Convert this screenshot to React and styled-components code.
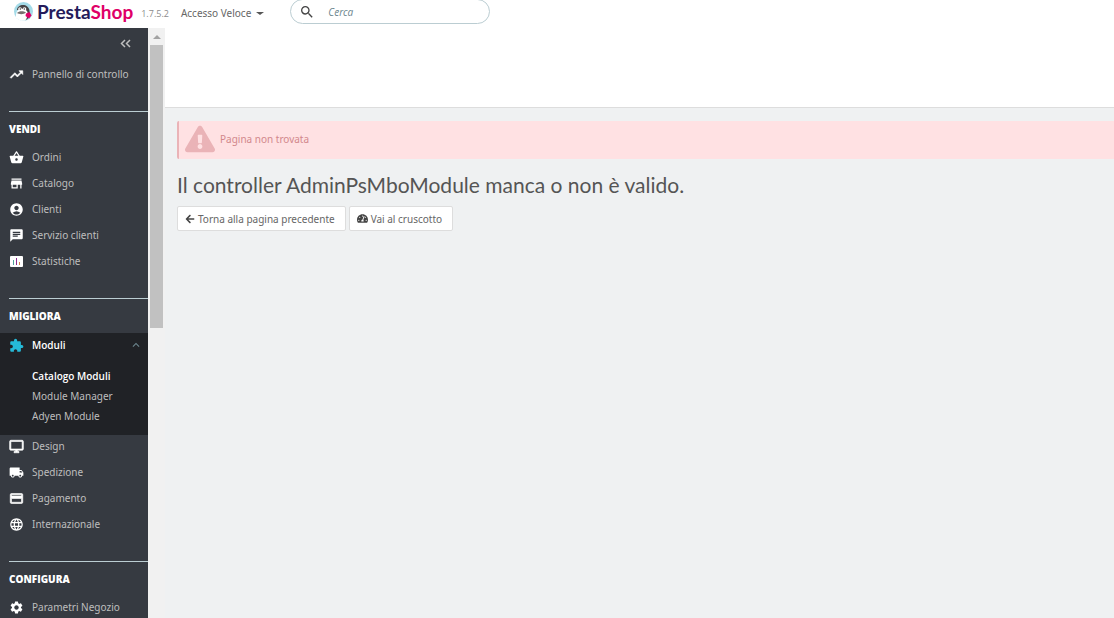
import React from "react"
import styled, { createGlobalStyle } from "styled-components"
import {
  MdAccountCircle,
  MdChat,
  MdExtension,
  MdKeyboardArrowUp,
  MdLanguage,
  MdLocalShipping,
  MdOutlineDesktopWindows,
  MdPayment,
  MdSearch,
  MdSettings,
  MdShoppingBasket,
  MdStore,
  MdTrendingUp,
} from "react-icons/md"
import {
  FaArrowLeft,
  FaExclamationTriangle,
  FaTachometerAlt,
} from "react-icons/fa"

const white = "#ffffff"
const slate = "#363a41"
const ink = "#202226"
const grey = "#bebebe"
const line = "#bbcdd2"
const cyan = "#25b9d7"
const pageGrey = "#eff1f2"
const textGrey = "#6c868e"

const bodyFont = `"Noto Sans", "Open Sans", sans-serif`
const boldFont = `"Open Sans", sans-serif`

const GlobalStyle = createGlobalStyle`
  * {
    box-sizing: border-box;
  }
  body {
    margin: 0;
    background: ${pageGrey};
    font-family: ${bodyFont};
    font-size: 10px;
    color: #555555;
  }
`

const Shell = styled.div`
  display: flex;
  flex-direction: column;
  height: 100vh;
  overflow: hidden;
`

const Header = styled.header`
  display: flex;
  align-items: flex-start;
  flex: none;
  height: 28px;
  padding-left: 13px;
  background: ${white};
`

const Brand = styled.a`
  display: flex;
  align-items: center;
  gap: 3px;
  height: 23px;
  color: #251b5b;
  font-family: Lato, sans-serif;
  font-size: 19px;
  font-weight: 700;
  text-decoration: none;
`

const BrandAccent = styled.span`
  color: #df0067;
`

const Version = styled.span`
  margin-left: 8px;
  line-height: 28px;
  font-family: ${boldFont};
  font-size: 9px;
  color: #8c8c8c;
`

const QuickAccess = styled.button`
  display: flex;
  align-items: center;
  gap: 5px;
  height: 26px;
  margin-left: 12px;
  padding: 0;
  border: 0;
  background: none;
  font: inherit;
  color: #666666;
`

const Caret = styled.span`
  border: 4px solid transparent;
  border-top: 3px solid #555555;
  border-bottom: 0;
`

const Search = styled.form`
  display: flex;
  align-items: center;
  gap: 13px;
  width: 200px;
  height: 25px;
  margin: -1px 0 0 26px;
  padding: 0 8px;
  border: 1px solid ${line};
  border-radius: 13px;
  color: #444444;
`

const SearchInput = styled.input`
  flex: 1;
  min-width: 0;
  padding: 0;
  border: 0;
  outline: 0;
  background: none;
  font: inherit;
  font-family: ${boldFont};
  font-style: italic;

  &::placeholder {
    color: ${textGrey};
    opacity: 1;
  }
`

const Body = styled.div`
  display: flex;
  flex: 1;
  min-height: 0;
`

const Sidebar = styled.nav`
  flex: none;
  width: 148px;
  overflow: hidden;
  background: ${slate};
`

const Collapse = styled.button`
  display: flex;
  align-items: center;
  justify-content: flex-end;
  width: 100%;
  height: 31px;
  margin-bottom: 4px;
  padding: 0 17px 0 0;
  border: 0;
  background: none;
  color: ${grey};
`

const List = styled.ul`
  margin: 0;
  padding: 0;
  list-style: none;
`

const Section = styled.section`
  margin-top: 26px;
`

const SectionTitle = styled.h2`
  margin: 0 0 0 9px;
  border-top: 1px solid ${line};
  line-height: 34px;
  font-family: ${boldFont};
  font-size: 10px;
  font-weight: 800;
  color: ${white};
`

const NavLink = styled.a`
  display: flex;
  align-items: center;
  gap: 8px;
  height: ${({ $active }) => ($active ? "24px" : "22px")};
  margin-bottom: ${({ $active }) => ($active ? "0" : "4px")};
  padding: 0 5px 0 9px;
  font-family: ${({ $active }) => ($active ? boldFont : bodyFont)};
  font-weight: ${({ $active }) => ($active ? 600 : 400)};
  color: ${({ $active }) => ($active ? white : grey)};
  text-decoration: none;
  white-space: nowrap;

  svg {
    flex: none;
    color: ${({ $active }) => ($active ? cyan : white)};
  }

  path:not([fill="none"]) {
    stroke-width: ${({ $heavy }) => ($heavy ? "1px" : "0")};
  }

  svg:nth-of-type(2) {
    margin-left: auto;
    color: ${textGrey};
  }
`

const ActiveItem = styled.li`
  background: ${ink};
`

const SubMenu = styled(List)`
  padding: 9px 0 9px 32px;
`

const SubLink = styled.a`
  display: block;
  line-height: 20px;
  font-family: ${({ $active }) => ($active ? boldFont : bodyFont)};
  font-weight: ${({ $active }) => ($active ? 600 : 400)};
  color: ${({ $active }) => ($active ? white : grey)};
  text-decoration: none;
`

const ScrollTrack = styled.div`
  display: flex;
  flex-direction: column;
  align-items: center;
  flex: none;
  width: 17px;
  background: #f1f1f1;
`

const ScrollArrow = styled.span`
  margin: 7px 0 6px;
  border: 4px solid transparent;
  border-top: 0;
  border-bottom-color: #a3a3a3;
`

const ScrollThumb = styled.span`
  width: 13px;
  height: 48%;
  background: #c1c1c1;
`

const Main = styled.main`
  flex: 1;
  min-width: 0;
`

const PageHead = styled.div`
  height: 80px;
  border-bottom: 1px solid #dddddd;
  background: ${white};
`

const Content = styled.div`
  padding: 13px 0 0 12px;
`

const Alert = styled.div`
  display: flex;
  align-items: center;
  gap: 5px;
  height: 38px;
  padding: 0 0 2px 6px;
  border-left: 2px solid #eab3b7;
  border-radius: 2px 0 0 2px;
  background: #ffe1e3;
  color: #d2888c;

  svg {
    color: #eab3b7;
  }
`

const Title = styled.h1`
  margin: 11px 0 6px;
  font-family: "Ubuntu Condensed", Lato, sans-serif;
  font-size: 21px;
  font-weight: 400;
  line-height: 30px;
  color: #555555;
`

const Actions = styled.div`
  display: flex;
  gap: 3px;
`

const Button = styled.button`
  display: flex;
  align-items: center;
  gap: 3px;
  height: 25px;
  padding: 0 10px 0 7px;
  border: 1px solid #dddddd;
  border-radius: 2px;
  background: ${white};
  font: inherit;
  color: #666666;

  svg {
    color: #444444;
  }
`

const Mascot = () => (
  <svg width="21" height="21" viewBox="0 0 21 21" aria-hidden="true">
    <circle cx="10.5" cy="10.5" r="9.5" fill="#a4dbe8" />
    <path
      d="M4 9C4 6 7 4 10 4s6 2 6.500 5.500c.3 3 0 5-1 7.500a9.500 9.500 0 0 1-4 2.500c2-3 2-8 0-9.500z"
      fill="#454345"
    />
    <path
      d="M3 16.500c-.5-3 .5-7 3.500-8.500 3-1 7 0 8 3 .5 3.500-.5 6.500-2.500 8.800-4 .4-7-1-9-3.300z"
      fill="#ffffff"
    />
    <circle cx="7" cy="8" r="1.800" fill="#ffffff" />
    <circle cx="11.500" cy="8" r="1.800" fill="#ffffff" />
    <circle cx="7.300" cy="8" r=".7" fill="#333333" />
    <circle cx="11.300" cy="8" r=".7" fill="#333333" />
    <path d="M4 12c2-2.300 6.500-2.300 9-.5-2 2-6.500 2.200-9 .5z" fill="#77706f" />
    <path d="M13 12.500l3.500-1.500 2 3.500-2.500 3-3.500-2.500z" fill="#df0067" />
  </svg>
)

const ChevronsLeft = () => (
  <svg width="11" height="9" viewBox="0 0 11 9" aria-hidden="true">
    <path
      d="M5 1L1.5 4.5L5 8M10 1L6.5 4.5L10 8"
      fill="none"
      stroke="currentColor"
      strokeWidth="1.5"
    />
  </svg>
)

const StatsIcon = () => (
  <svg width="15" height="15" viewBox="0 0 15 15" aria-hidden="true">
    <rect x="1" y="2" width="13" height="11" rx="1" fill="#ffffff" />
    <rect x="4" y="6" width="1" height="5" fill="#4da29b" />
    <rect x="7" y="4" width="1" height="7" fill="#8b2c8c" />
    <rect x="10" y="8" width="1" height="3" fill="#d08a4a" />
  </svg>
)

const sections = [
  {
    title: "VENDI",
    items: [
      { label: "Ordini", Icon: MdShoppingBasket },
      { label: "Catalogo", Icon: MdStore },
      { label: "Clienti", Icon: MdAccountCircle },
      { label: "Servizio clienti", Icon: MdChat },
      { label: "Statistiche", Icon: StatsIcon },
    ],
  },
  {
    title: "MIGLIORA",
    items: [
      {
        label: "Moduli",
        Icon: MdExtension,
        children: ["Catalogo Moduli", "Module Manager", "Adyen Module"],
      },
      { label: "Design", Icon: MdOutlineDesktopWindows, heavy: true },
      { label: "Spedizione", Icon: MdLocalShipping },
      { label: "Pagamento", Icon: MdPayment, heavy: true },
      { label: "Internazionale", Icon: MdLanguage },
    ],
  },
  {
    title: "CONFIGURA",
    items: [{ label: "Parametri Negozio", Icon: MdSettings }],
  },
]

const NavItem = ({ item }) => {
  const { label, Icon, heavy, children } = item

  if (!children) {
    return (
      <li>
        <NavLink href="#" $heavy={heavy}>
          <Icon size={15} />
          {label}
        </NavLink>
      </li>
    )
  }

  return (
    <ActiveItem>
      <NavLink href="#" $active>
        <Icon size={15} />
        {label}
        <MdKeyboardArrowUp size={14} />
      </NavLink>
      <SubMenu>
        {children.map((child, key) => (
          <li key={child}>
            <SubLink href="#" $active={key === 0}>
              {child}
            </SubLink>
          </li>
        ))}
      </SubMenu>
    </ActiveItem>
  )
}

const App = () => (
  <Shell>
    <GlobalStyle />
    <Header>
      <Brand href="#">
        <Mascot />
        <span>
          Presta<BrandAccent>Shop</BrandAccent>
        </span>
      </Brand>
      <Version>1.7.5.2</Version>
      <QuickAccess type="button">
        Accesso Veloce
        <Caret />
      </QuickAccess>
      <Search role="search">
        <MdSearch size={16} />
        <SearchInput type="text" placeholder="Cerca" aria-label="Cerca" />
      </Search>
    </Header>
    <Body>
      <Sidebar>
        <Collapse type="button" aria-label="Riduci menu">
          <ChevronsLeft />
        </Collapse>
        <NavLink href="#" $heavy>
          <MdTrendingUp size={15} />
          Pannello di controllo
        </NavLink>
        {sections.map(({ title, items }) => (
          <Section key={title}>
            <SectionTitle>{title}</SectionTitle>
            <List>
              {items.map((item) => (
                <NavItem key={item.label} item={item} />
              ))}
            </List>
          </Section>
        ))}
      </Sidebar>
      <ScrollTrack>
        <ScrollArrow />
        <ScrollThumb />
      </ScrollTrack>
      <Main>
        <PageHead />
        <Content>
          <Alert role="alert">
            <FaExclamationTriangle size={30} />
            Pagina non trovata
          </Alert>
          <Title>Il controller AdminPsMboModule manca o non è valido.</Title>
          <Actions>
            <Button type="button">
              <FaArrowLeft size={10} />
              Torna alla pagina precedente
            </Button>
            <Button type="button">
              <FaTachometerAlt size={11} />
              Vai al cruscotto
            </Button>
          </Actions>
        </Content>
      </Main>
    </Body>
  </Shell>
)

export default App
